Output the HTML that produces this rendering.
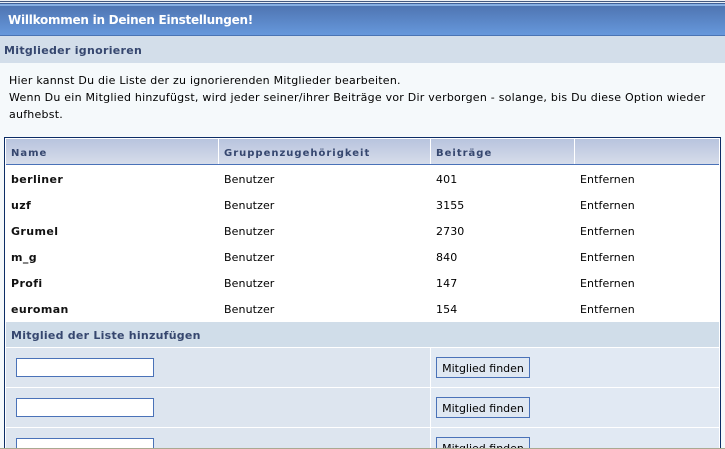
<!DOCTYPE html>
<html><head><meta charset="utf-8"><style>
html,body{margin:0;padding:0;width:725px;height:449px;overflow:hidden;background:#f5f9fb}
body{position:relative;font-family:"DejaVu Sans","Liberation Sans",sans-serif;font-size:11px;color:#000}
.a{position:absolute}
.t{position:absolute;white-space:nowrap;line-height:14px;letter-spacing:.1px}
.p{letter-spacing:.24px}
.b{font-weight:bold;letter-spacing:.4px;color:#111}
.h{font-weight:bold;color:#36476f;letter-spacing:.25px}
.n{font-size:10px;letter-spacing:1px}
.i{position:absolute;left:16px;width:136px;height:17px;background:#fff;border:1px solid #4a72b8}
.k{position:absolute;left:436px;width:92px;height:19px;border:1px solid #4a72b8;background:#e0e8f2;text-align:center;line-height:21px;white-space:nowrap}
</style></head><body>
<div class="a" style="left:0;top:0;width:725px;height:1px;background:#eef1f5"></div>
<div class="a" style="left:0;top:1px;width:725px;height:1px;background:#44587f"></div>
<div class="a" style="left:0;top:2px;width:725px;height:1px;background:#e8eef6"></div>
<div class="a" style="left:0;top:3px;width:725px;height:1px;background:#3f5f96"></div>
<div class="a" style="left:0;top:4px;width:725px;height:2px;background:#86aee2"></div>
<div class="a" style="left:0;top:6px;width:725px;height:29px;background:linear-gradient(#4f75b2,#6698dc)"></div>
<div class="a" style="left:0;top:35px;width:725px;height:1px;background:#4a74b4"></div>
<div class="a" style="left:0;top:36px;width:725px;height:27px;background:#d3deea"></div>
<div class="t b" style="left:8px;top:13px;color:#fff;font-size:12px;letter-spacing:-.25px">Willkommen in Deinen Einstellungen!</div>
<div class="t h" style="left:4px;top:44px;letter-spacing:.3px">Mitglieder ignorieren</div>
<div class="t p" style="left:9px;top:74px">Hier kannst Du die Liste der zu ignorierenden Mitglieder bearbeiten.</div>
<div class="t p" style="left:9px;top:91px">Wenn Du ein Mitglied hinzufügst, wird jeder seiner/ihrer Beiträge vor Dir verborgen - solange, bis Du diese Option wieder</div>
<div class="t p" style="left:9px;top:108px">aufhebst.</div>

<div class="a" style="left:4px;top:137px;width:717px;height:312px;background:#fff;border-left:1px solid #0c2d66;border-right:1px solid #0c2d66;border-top:1px solid #0c2d66;box-sizing:border-box"></div>
<div class="a" style="left:6px;top:139px;width:713px;height:25px;background:linear-gradient(#b8c4de,#d6dcea)"></div>
<div class="a" style="left:6px;top:164px;width:713px;height:1px;background:#4a72b8"></div>
<div class="a" style="left:218px;top:139px;width:1px;height:25px;background:#fff"></div>
<div class="a" style="left:430px;top:139px;width:1px;height:25px;background:#fff"></div>
<div class="a" style="left:574px;top:139px;width:1px;height:25px;background:#fff"></div>
<div class="t h n" style="left:11px;top:147px">Name</div>
<div class="t h n" style="left:224px;top:147px">Gruppenzugehörigkeit</div>
<div class="t h n" style="left:436px;top:147px">Beiträge</div>

<div class="t b" style="left:11px;top:173px">berliner</div><div class="t" style="left:224px;top:173px">Benutzer</div><div class="t" style="left:436px;top:173px">401</div><div class="t" style="left:580px;top:173px">Entfernen</div>
<div class="t b" style="left:11px;top:199px">uzf</div><div class="t" style="left:224px;top:199px">Benutzer</div><div class="t" style="left:436px;top:199px">3155</div><div class="t" style="left:580px;top:199px">Entfernen</div>
<div class="t b" style="left:11px;top:225px">Grumel</div><div class="t" style="left:224px;top:225px">Benutzer</div><div class="t" style="left:436px;top:225px">2730</div><div class="t" style="left:580px;top:225px">Entfernen</div>
<div class="t b" style="left:11px;top:251px">m_g</div><div class="t" style="left:224px;top:251px">Benutzer</div><div class="t" style="left:436px;top:251px">840</div><div class="t" style="left:580px;top:251px">Entfernen</div>
<div class="t b" style="left:11px;top:277px">Profi</div><div class="t" style="left:224px;top:277px">Benutzer</div><div class="t" style="left:436px;top:277px">147</div><div class="t" style="left:580px;top:277px">Entfernen</div>
<div class="t b" style="left:11px;top:303px">euroman</div><div class="t" style="left:224px;top:303px">Benutzer</div><div class="t" style="left:436px;top:303px">154</div><div class="t" style="left:580px;top:303px">Entfernen</div>

<div class="a" style="left:6px;top:322px;width:713px;height:25px;background:#d0dde9"></div>
<div class="t h" style="left:11px;top:329px">Mitglied der Liste hinzufügen</div>

<div class="a" style="left:6px;top:348px;width:424px;height:39px;background:#dde5ef"></div>
<div class="a" style="left:431px;top:348px;width:288px;height:39px;background:#e1e9f3"></div>
<div class="a" style="left:6px;top:388px;width:424px;height:39px;background:#dde5ef"></div>
<div class="a" style="left:431px;top:388px;width:288px;height:39px;background:#e1e9f3"></div>
<div class="a" style="left:6px;top:428px;width:424px;height:21px;background:#dde5ef"></div>
<div class="a" style="left:431px;top:428px;width:288px;height:21px;background:#e1e9f3"></div>

<div class="i" style="top:358px"></div>
<div class="i" style="top:398px"></div>
<div class="i" style="top:438px"></div>
<div class="k" style="top:357px">Mitglied finden</div>
<div class="k" style="top:397px">Mitglied finden</div>
<div class="k" style="top:437px">Mitglied finden</div>
<div class="a" style="left:0;top:448px;width:725px;height:1px;background:#aaa992"></div>
</body></html>
